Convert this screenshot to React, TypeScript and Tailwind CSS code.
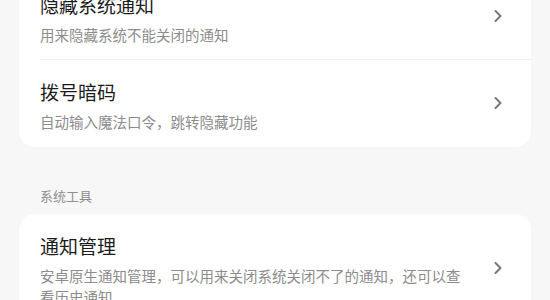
const sections = [
  {
    label: '',
    items: [
      { title: '隐藏系统通知', desc: '用来隐藏系统不能关闭的通知' },
      { title: '拨号暗码', desc: '自动输入魔法口令，跳转隐藏功能' },
    ],
  },
  {
    label: '系统工具',
    items: [
      { title: '通知管理', desc: '安卓原生通知管理，可以用来关闭系统关闭不了的通知，还可以查看历史通知' },
    ],
  },
]

function Chevron() {
  return (
    <svg width="10" height="14" viewBox="0 0 10 14" fill="none" className="mb-[5px] shrink-0">
      <path d="M2.5 2 L7.5 7 L2.5 12" stroke="#777777" strokeWidth="2" strokeLinecap="round" strokeLinejoin="round" />
    </svg>
  )
}

function Row({ title, desc, divider }: { title: string; desc: string; divider: boolean }) {
  return (
    <div className="relative flex items-center gap-6 pl-[21px] pr-[28px] pt-[19px] pb-[15px]">
      <div className="flex-1 min-w-0">
        <div className="text-[19px] leading-[26px] text-[#1c1c1c]">{title}</div>
        <div className="mt-[6px] text-[14.5px] leading-[21px] text-[#8c8c8c]">{desc}</div>
      </div>
      <Chevron />
      {divider && <div className="absolute bottom-0 left-[21px] right-0 h-px bg-[#f1f1f1]" />}
    </div>
  )
}

export default function App() {
  return (
    <div
      className="min-h-[300px] bg-[#f7f7f7] px-[19px]"
      style={{ fontFamily: '"Noto Sans CJK SC", "Noto Sans", sans-serif' }}
    >
      {sections.map((section, i) => (
        <div key={i}>
          {section.label ? (
            <div className="pl-[21px] pt-[39px] pb-[8px] text-[13px] leading-[20px] text-[#8e8e8e]">{section.label}</div>
          ) : null}
          <div className={`rounded-[16px] bg-white ${i === 0 ? 'mt-[-27px]' : ''}`}>
            {section.items.map((item, j) => (
              <Row key={item.title} title={item.title} desc={item.desc} divider={j < section.items.length - 1} />
            ))}
          </div>
        </div>
      ))}
    </div>
  )
}
